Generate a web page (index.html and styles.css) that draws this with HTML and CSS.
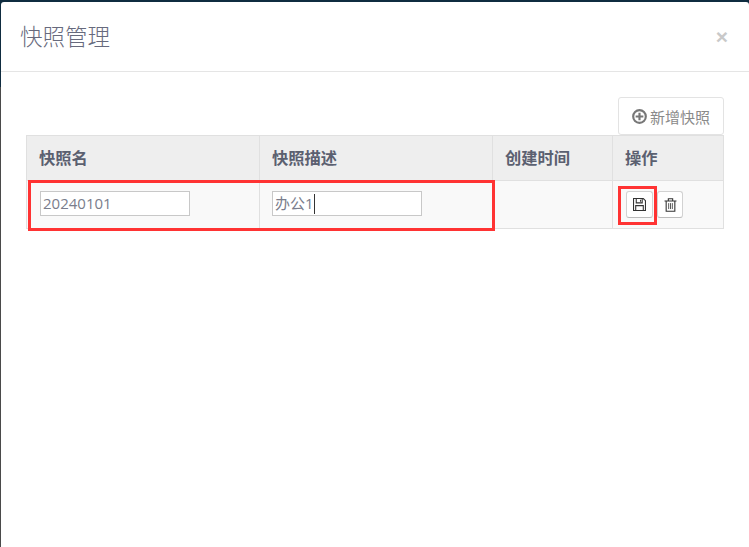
FILE: index.html
```html
<!DOCTYPE html>
<html lang="zh-CN">

<head>
    <meta charset="UTF-8">
    <meta name="viewport" content="width=device-width, initial-scale=1.0">
    <title>快照管理</title>
    <link rel="stylesheet" href="styles.css">
</head>

<body>
    <div class="modal">
        <div class="modal-header">
            <h4 class="modal-title">快照管理</h4>
            <span class="modal-close">×</span>
        </div>
        <div class="modal-body">
            <div class="toolbar">
                <button class="add-button">
                    <svg class="add-icon" viewBox="1 1 14 14" width="15" height="15">
                        <circle cx="8" cy="8" r="5.9" fill="none" stroke="#777" stroke-width="2"></circle>
                        <path d="M8 4.4v7.2M4.4 8h7.2" stroke="#777" stroke-width="2"></path>
                    </svg>
                    新增快照
                </button>
            </div>
            <table class="snapshot-table">
                <thead>
                    <tr>
                        <th class="col-name">快照名</th>
                        <th class="col-desc">快照描述</th>
                        <th class="col-time">创建时间</th>
                        <th>操作</th>
                    </tr>
                </thead>
                <tbody>
                    <tr>
                        <td><input class="cell-input" type="text" value="20240101"></td>
                        <td>
                            <div class="cell-input fake-input">办公1<span class="caret"></span></div>
                        </td>
                        <td></td>
                        <td>
                            <div class="actions">
                                <button class="icon-button save-button">
                                    <svg viewBox="1 1 12 12" width="13" height="13">
                                        <path d="M1.5 1.5h9l2 2v9h-11z" fill="none" stroke="#333" stroke-width="1"></path>
                                        <path d="M4 1.5v4h5.5v-4M3.5 12.5v-4.5h7v4.5" fill="none" stroke="#333" stroke-width="1"></path>
                                        <path d="M7.5 2.5h1v2h-1z" fill="#333"></path>
                                    </svg>
                                </button>
                                <button class="icon-button">
                                    <svg viewBox="1 1 12 12.5" width="13" height="14">
                                        <path d="M1.5 3.5h11M5 3.5v-2h4v2M3 3.5v9.5h8v-9.5" fill="none" stroke="#333" stroke-width="1"></path>
                                        <path d="M5.3 5.5v5.5M7 5.5v5.5M8.7 5.5v5.5" fill="none" stroke="#555" stroke-width="0.9"></path>
                                    </svg>
                                </button>
                            </div>
                        </td>
                    </tr>
                </tbody>
            </table>
        </div>
        <!-- Red marks drawn over the screenshot -->
        <div class="mark mark-inputs"></div>
        <div class="mark mark-save"></div>
    </div>
</body>

</html>
```

FILE: styles.css
```css
* {
    box-sizing: border-box;
}

html,
body {
    height: 100%;
}

body {
    margin: 0;
    padding: 2px 0 0 1px;
    overflow: hidden;
    background: linear-gradient(#0f2c40 87px, #4a4a4a 87px);
    color: #676a7d;
    font-family: "Open Sans", "Noto Sans CJK SC", sans-serif;
    font-size: 15px;
}

.modal {
    position: relative;
    height: 100%;
    background-color: #fff;
    border-top-left-radius: 3px;
    border-top-right-radius: 3px;
}

/* Header */
.modal-header {
    display: flex;
    justify-content: space-between;
    align-items: center;
    height: 70px;
    padding: 0 15px 0 19px;
    border-bottom: 1px solid #e5e5e5;
}

.modal-title {
    margin: 0 0 3px;
    font-size: 22.5px;
    font-weight: 300;
    color: #676a7d;
}

.modal-close {
    margin: 0 6px 0 0;
    font-family: "Liberation Sans", sans-serif;
    font-size: 21px;
    font-weight: bold;
    color: #c9c9c9;
}

/* Body */
.modal-body {
    padding: 25px 25px 0;
}

.toolbar {
    display: flex;
    justify-content: flex-end;
}

.add-button {
    display: flex;
    align-items: center;
    gap: 3px;
    width: 106px;
    height: 38px;
    padding: 0 0 0 13px;
    border: 1px solid #e3e3e3;
    border-radius: 3px;
    background-color: #fff;
    color: #8a8a8a;
    font-family: inherit;
    font-size: 15px;
}

/* Table */
.snapshot-table {
    width: 698px;
    border-collapse: collapse;
    table-layout: fixed;
}

.snapshot-table th,
.snapshot-table td {
    border: 1px solid #e0e0e0;
    padding: 0 13px;
    text-align: left;
}

.snapshot-table th {
    height: 45px;
    padding-left: 12px;
    padding-bottom: 3px;
    background-color: #eee;
    font-size: 16.3px;
    font-weight: 600;
    color: #5b6070;
}

.snapshot-table td {
    height: 48px;
    padding-bottom: 2px;
    background-color: #f9f9f9;
}

.snapshot-table td:nth-child(2) {
    padding-left: 12px;
}

.col-name,
.col-desc {
    width: 233px;
}

.col-time {
    width: 120px;
}

.cell-input {
    display: block;
    width: 150px;
    height: 25px;
    padding: 0 2px 2px;
    border: 1px solid #c8c8c8;
    background-color: #fff;
    color: #7a7d8c;
    font-family: inherit;
    font-size: 15px;
}

.fake-input {
    display: flex;
    align-items: center;
}

.caret {
    width: 1px;
    height: 20px;
    margin-top: 2px;
    background-color: #333;
}

.actions {
    display: flex;
    gap: 4px;
    margin-top: 2px;
}

.icon-button {
    display: flex;
    align-items: center;
    justify-content: center;
    width: 26px;
    height: 27px;
    padding: 0;
    border: 1px solid #d2d2d2;
    border-bottom-color: #bbb;
    border-radius: 3px;
    background-color: #fff;
}

.save-button {
    width: 27px;
}

/* Red marks */
.mark {
    position: absolute;
    border: 3px solid #ff3333;
}

.mark-inputs {
    left: 27px;
    top: 178px;
    width: 467px;
    height: 51px;
}

.mark-save {
    left: 617px;
    top: 184px;
    width: 39px;
    height: 39px;
}
```
